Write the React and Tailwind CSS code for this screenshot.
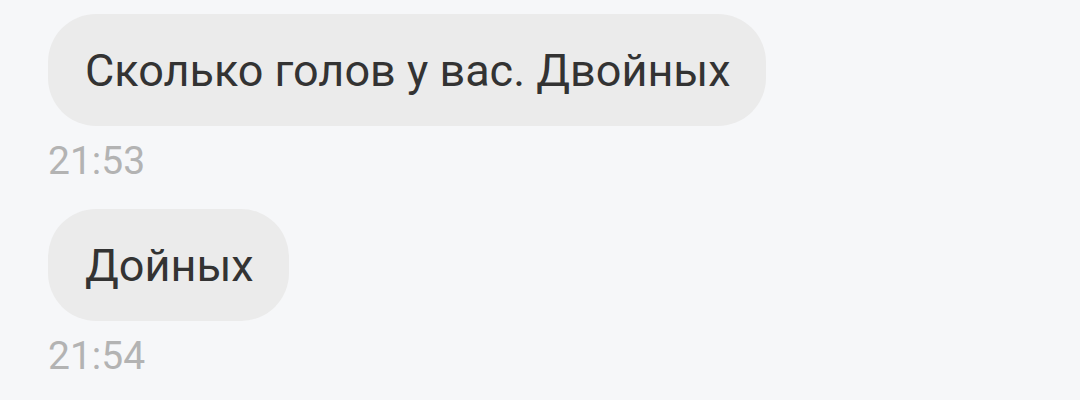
const messages = [
  { id: 1, text: 'Сколько голов у вас. Двойных', time: '21:53' },
  { id: 2, text: 'Дойных', time: '21:54' },
];

const App = () => {
  return (
    <div
      className="w-[1080px] h-[400px] overflow-hidden bg-[#f6f7f9] pl-[48px] pt-[14px]"
      style={{ fontFamily: 'Roboto, "Noto Sans", sans-serif' }}
    >
      {messages.map((msg) => (
        <div key={msg.id} className="flex flex-col items-start mb-[25px]">
          <div className="bg-[#ebebeb] rounded-[48px] h-[112px] pl-[37px] pr-[35px] pt-[31px] pb-[29px] text-[45px] leading-[52px] text-[#333333] whitespace-nowrap">
            {msg.text}
          </div>
          <div className="mt-[13px] text-[39px] leading-[45px] text-[#b3b3b3]">{msg.time}</div>
        </div>
      ))}
    </div>
  );
};

export default App;
